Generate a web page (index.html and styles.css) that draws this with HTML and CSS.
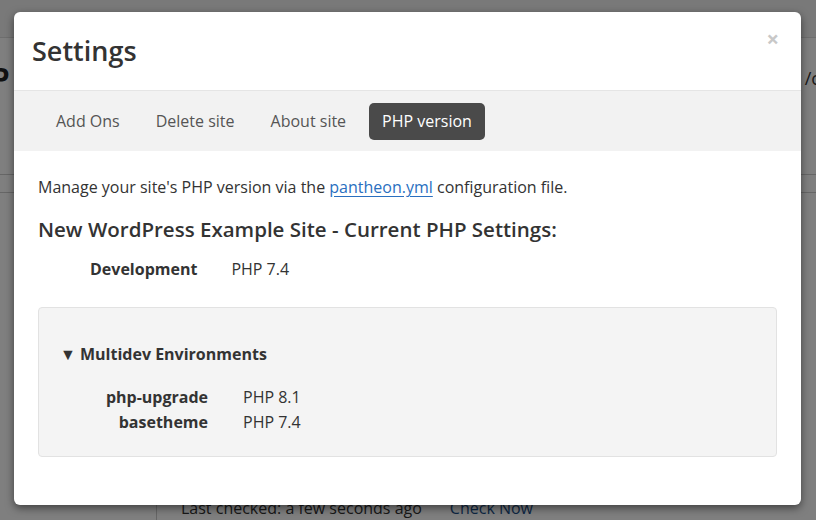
FILE: index.html
```html
<!DOCTYPE html>
<html>
<head>
<meta charset="utf-8">
<link rel="stylesheet" href="styles.css">
</head>
<body>
<div class="page">
  <div class="page-top"></div>
  <div class="page-title"><span class="big">P</span><span class="right-txt">/c</span></div>
  <div class="page-line l1"></div>
  <div class="page-line l2"></div>
  <div class="page-spacer"></div>
  <div class="page-foot">
    <span class="foot-col"></span>
    <span class="last">Last checked: a few seconds ago</span>
    <span class="check">Check Now</span>
  </div>
</div>
<div class="overlay"></div>
<div class="modal">
  <div class="modal-header">
    <h1 class="modal-title">Settings</h1>
    <span class="close">×</span>
  </div>
  <nav class="tabs">
    <span class="tab">Add Ons</span>
    <span class="tab">Delete site</span>
    <span class="tab">About site</span>
    <span class="tab active">PHP version</span>
  </nav>
  <div class="modal-body">
    <p class="intro">Manage your site's PHP version via the <a class="link">pantheon.yml</a> configuration file.</p>
    <h2 class="site-heading">New WordPress Example Site - Current PHP Settings:</h2>
    <div class="env-row">
      <span class="env-label">Development</span>
      <span class="env-value">PHP 7.4</span>
    </div>
    <div class="multidev">
      <div class="multidev-title">▼ Multidev Environments</div>
      <div class="md-grid">
        <span class="md-label">php-upgrade</span><span class="md-value">PHP 8.1</span>
        <span class="md-label">basetheme</span><span class="md-value">PHP 7.4</span>
      </div>
    </div>
  </div>
</div>
</body>
</html>
```
FILE: styles.css
```css
* { box-sizing: border-box; }
html, body { margin: 0; padding: 0; }
body {
  width: 816px;
  height: 520px;
  overflow: hidden;
  font-family: "Open Sans", "Liberation Sans", sans-serif;
  background: #fff;
  color: #333;
  position: relative;
}
.page { height: 520px; display: flex; flex-direction: column; }
.page-top { height: 38px; background: #f3f3f3; border-bottom: 1px solid #ddd; }
.page-title { display: flex; justify-content: space-between; align-items: center; height: 80px; }
.big { font-size: 28px; font-weight: 700; margin-left: -8px; color: #222; }
.right-txt { font-size: 18px; color: #333; margin-right: -4px; }
.page-line { height: 1px; background: #ccc; }
.l1 { margin-top: 56px; }
.l2 { margin-top: 17px; }
.page-spacer { flex: 1; }
.page-foot { height: 24px; display: flex; align-items: flex-start; font-size: 16px; line-height: 24px; }
.foot-col { width: 157px; border-right: 1px solid #ccc; height: 24px; }
.last { margin-left: 24px; color: #333; }
.check { margin-left: 28px; color: #1b4f8a; }
.overlay { position: absolute; inset: 0; background: rgba(0,0,0,0.5); }
.modal {
  position: absolute;
  left: 14px;
  top: 12px;
  width: 787px;
  height: 493px;
  background: #fff;
  border-radius: 6px;
  box-shadow: 0 3px 9px rgba(0,0,0,0.5);
  overflow: hidden;
}
.modal-header {
  height: 79px;
  border-bottom: 1px solid #e5e5e5;
  display: flex;
  align-items: flex-start;
  justify-content: space-between;
  padding: 0 22px 0 18px;
}
.modal-title { margin: 20px 0 0; font-size: 27px; font-weight: 600; color: #333; line-height: 38px; }
.close { margin-top: 14px; font-size: 22px; font-weight: 700; color: #c8c8c8; line-height: 24px; }
.tabs {
  height: 60px;
  background: #f2f2f2;
  display: flex;
  align-items: center;
  gap: 10px;
  padding-left: 29px;
}
.tab {
  font-size: 16px;
  color: #555;
  padding: 0 13px;
  height: 37px;
  line-height: 37px;
  border-radius: 5px;
}
.tab.active { background: #4a4a4a; color: #fff; }
.modal-body { padding: 24px 24px 0; }
.intro { margin: 0; font-size: 16px; line-height: 24px; color: #333; }
.link { color: #2a6fbf; text-decoration: underline; text-underline-offset: 3px; }
.site-heading { margin: 16px 0 0; font-size: 20.5px; font-weight: 600; line-height: 28px; color: #333; }
.env-row { display: flex; gap: 34px; margin: 14px 0 0 52px; font-size: 16px; line-height: 24px; }
.env-label { font-weight: 700; }
.multidev {
  margin-top: 26px;
  height: 150px;
  background: #f4f4f4;
  border: 1px solid #e2e2e2;
  border-radius: 4px;
  padding: 34px 24px 0 21px;
}
.multidev-title { font-size: 16px; font-weight: 700; line-height: 24px; }
.md-grid {
  display: grid;
  grid-template-columns: 148px auto;
  column-gap: 35px;
  margin-top: 19px;
  font-size: 16px;
  line-height: 25px;
}
.md-label { font-weight: 700; text-align: right; }
```
